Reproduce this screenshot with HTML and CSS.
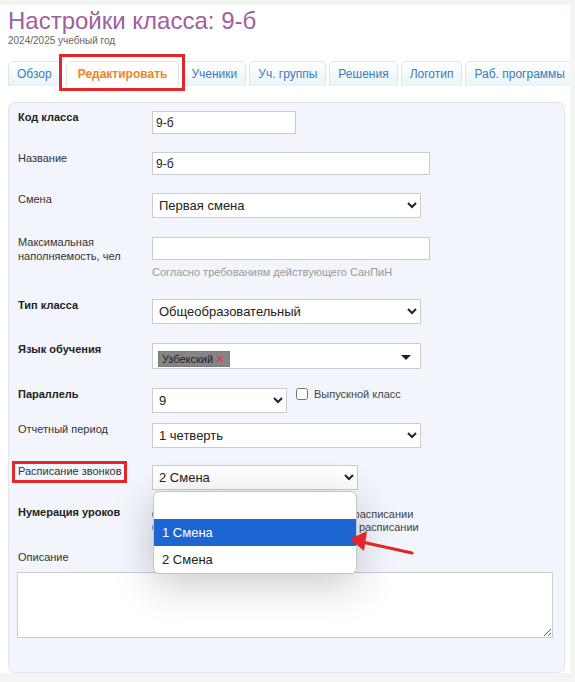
FILE: index.html
```html
<!DOCTYPE html>
<html lang="ru">
<head>
    <meta charset="UTF-8">
    <meta name="viewport" content="width=device-width, initial-scale=1.0">
    <title>Настройки класса: 9-б</title>
    <link rel="stylesheet" href="styles.css">
</head>
<body>
    <div class="page">
        <h1 class="title">Настройки класса: 9-б</h1>
        <div class="year">2024/2025 учебный год</div>

        <ul class="tabs">
            <li class="tab">Обзор</li>
            <li class="tab active">Редактировать</li>
            <li class="tab">Ученики</li>
            <li class="tab">Уч. группы</li>
            <li class="tab">Решения</li>
            <li class="tab">Логотип</li>
            <li class="tab">Раб. программы</li>
        </ul>

        <div class="panel">
            <div class="row">
                <label class="lbl bold">Код класса</label>
                <input type="text" class="inp w-code" value="9-б">
            </div>

            <div class="row">
                <label class="lbl">Название</label>
                <input type="text" class="inp w-wide" value="9-б">
            </div>

            <div class="row gap19">
                <label class="lbl">Смена</label>
                <select class="sel w-full">
                    <option>Первая смена</option>
                </select>
            </div>

            <div class="row gap20">
                <label class="lbl lbl-two">Максимальная наполняемость, чел</label>
                <div class="field">
                    <input type="text" class="inp w-wide">
                    <div class="hint">Согласно требованиям действующего СанПиН</div>
                </div>
            </div>

            <div class="row gap19">
                <label class="lbl bold">Тип класса</label>
                <select class="sel w-full">
                    <option>Общеобразовательный</option>
                </select>
            </div>

            <div class="row gap19">
                <label class="lbl bold">Язык обучения</label>
                <div class="multi w-full">
                    <span class="tag">Узбекский <span class="tag-x">×</span></span>
                    <span class="multi-arrow"></span>
                </div>
            </div>

            <div class="row gap10">
                <label class="lbl bold">Параллель</label>
                <select class="sel w-short">
                    <option>9</option>
                </select>
                <label class="check">
                    <input type="checkbox"> Выпускной класс
                </label>
            </div>

            <div class="row gap17">
                <label class="lbl">Отчетный период</label>
                <select class="sel w-full">
                    <option>1 четверть</option>
                </select>
            </div>

            <div class="row gap16">
                <label class="lbl"><span class="mark">Расписание звонков</span></label>
                <div class="field drop-wrap">
                    <select class="sel w-bells">
                        <option>2 Смена</option>
                    </select>
                    <ul class="dropdown">
                        <li class="opt"></li>
                        <li class="opt selected">1 Смена</li>
                        <li class="opt">2 Смена</li>
                    </ul>
                </div>
            </div>

            <div class="row gap16">
                <label class="lbl bold">Нумерация уроков</label>
                <div class="field radios">
                    <label class="radio"><input type="radio" name="num"> Нумерация уроков как она задана в расписании</label>
                    <label class="radio"><input type="radio" name="num"> Нумерация всех уроков по порядку в расписании</label>
                </div>
            </div>

            <div class="desc">
                <label class="lbl">Описание</label>
                <textarea class="area"></textarea>
            </div>
        </div>

        <!-- стрелка-пометка -->
        <svg class="arrow" width="70" height="30" viewBox="0 0 70 30">
            <line x1="64" y1="26" x2="14" y2="15" stroke="#e3262a" stroke-width="3.2" stroke-linecap="round"/>
            <polygon points="2,12 19,4 16,24" fill="#e3262a"/>
        </svg>
    </div>
</body>
</html>
```

FILE: styles.css
```css
* {
    box-sizing: border-box;
}

body {
    margin: 0;
    background: #f3f5f3;
    font-family: 'Liberation Sans', Arial, sans-serif;
    color: #333;
    overflow: hidden;
}

.page {
    position: relative;
    width: 570px;
    height: 668px;
    margin-top: 5px;
    padding: 2px 5px 0 8px;
    background: #fff;
    overflow: hidden;
}

.title {
    margin: 0;
    font-size: 24px;
    line-height: 28px;
    font-weight: normal;
    color: #a0609c;
}

.year {
    font-size: 10px;
    line-height: 12px;
    color: #666;
}

.tabs {
    display: flex;
    gap: 3px;
    list-style: none;
    margin: 14px 0 0;
    padding: 0;
    white-space: nowrap;
}

.tab {
    flex: none;
    height: 25px;
    padding: 1px 8px 0;
    line-height: 23px;
    font-size: 12px;
    color: #3a7cbd;
    border: 1px solid #dbe6ec;
    border-bottom: none;
    border-radius: 5px 5px 0 0;
    background: linear-gradient(#ffffff, #e8f4fa);
}

.tab.active {
    position: relative;
    margin-left: 2px;
    padding: 1px 11px 0;
    color: #f0841f;
    font-weight: bold;
    background: #fff;
}

.tab.active::after {
    content: "";
    position: absolute;
    top: -8px;
    left: -8px;
    right: -7px;
    bottom: -5px;
    border: 3px solid #e3262a;
}

.panel {
    width: 557px;
    margin-top: 16px;
    padding: 8px 12px 34px 9px;
    background: #f2f6fc;
    border: 1px solid #dfe5ec;
    border-radius: 7px;
}

.row {
    display: flex;
    align-items: flex-start;
    margin-bottom: 18px;
}

.row.gap19 { margin-bottom: 19px; }
.row.gap20 { margin-bottom: 20px; }
.row.gap17 { margin-bottom: 17px; }
.row.gap16 { margin-bottom: 16px; }
.row.gap10 { margin-bottom: 10px; }

.lbl {
    flex: none;
    width: 134px;
    margin-top: -1px;
    font-size: 11px;
    line-height: 14px;
    color: #333;
}

.lbl.bold {
    font-weight: bold;
    color: #222;
}

.lbl-two {
    margin-top: -2px;
}

.mark {
    position: relative;
}

.mark::after {
    content: "";
    position: absolute;
    top: -4px;
    left: -6px;
    right: -5px;
    bottom: -6px;
    border: 3px solid #e3262a;
}

.field {
    display: flex;
    flex-direction: column;
}

.inp {
    height: 23px;
    padding: 0 3px;
    border: 1px solid #ccc;
    background: #fff;
    font-family: inherit;
    font-size: 12px;
    color: #222;
}

.sel {
    height: 25px;
    padding: 0 2px;
    border: 1px solid #ccc;
    border-radius: 0;
    background: #fff;
    font-family: inherit;
    font-size: 13px;
    color: #222;
}

.w-code { width: 144px; }
.w-wide { width: 278px; }
.w-full { width: 269px; }
.w-short { width: 135px; }
.w-bells { width: 206px; }

.hint {
    margin-top: 5px;
    font-size: 11px;
    line-height: 14px;
    color: #999;
}

.multi {
    position: relative;
    height: 26px;
    padding: 5px 0 0 5px;
    border: 1px solid #ccc;
    background: #fff;
}

.tag {
    display: inline-block;
    width: 72px;
    height: 16px;
    padding: 0 2px 0 3px;
    font-size: 11px;
    line-height: 14px;
    color: #222;
    background: #858585;
    border: 1px solid #7a7a7a;
}

.tag-x {
    font-size: 13px;
    line-height: 12px;
    color: #e8365d;
    font-weight: bold;
}

.multi-arrow {
    position: absolute;
    right: 9px;
    top: 11px;
    border-left: 5px solid transparent;
    border-right: 5px solid transparent;
    border-top: 5px solid #222;
}

.check {
    display: flex;
    align-items: center;
    gap: 6px;
    margin: 0 0 0 9px;
    font-size: 11px;
    color: #444;
}

.check input {
    width: 12px;
    height: 12px;
    margin: 0;
}

.drop-wrap {
    position: relative;
}

.dropdown {
    position: absolute;
    top: 26px;
    left: 1px;
    width: 204px;
    margin: 0;
    padding: 0;
    list-style: none;
    background: #fff;
    border: 1px solid #c4c4c4;
    border-radius: 6px;
    overflow: hidden;
    box-shadow: 0 10px 40px rgba(0, 0, 0, 0.22);
    z-index: 2;
}

.opt {
    height: 27px;
    padding-left: 8px;
    font-size: 13px;
    line-height: 27px;
    color: #222;
}

.opt.selected {
    background: #1b66d2;
    color: #fff;
}

.radios {
    gap: 1px;
    padding-top: 2px;
}

.radio {
    display: flex;
    align-items: center;
    gap: 4px;
    font-size: 11px;
    line-height: 12px;
    color: #444;
}

.radio input {
    width: 11px;
    height: 11px;
    margin: 0;
}

.desc .lbl {
    display: block;
    margin-top: 0;
    padding-top: 1px;
}

.area {
    display: block;
    width: 536px;
    height: 66px;
    margin: 8px 0 0 -1px;
    border: 1px solid #ccc;
    background: #fff;
    resize: both;
}

.arrow {
    position: absolute;
    left: 348px;
    top: 522px;
    z-index: 3;
}
```
